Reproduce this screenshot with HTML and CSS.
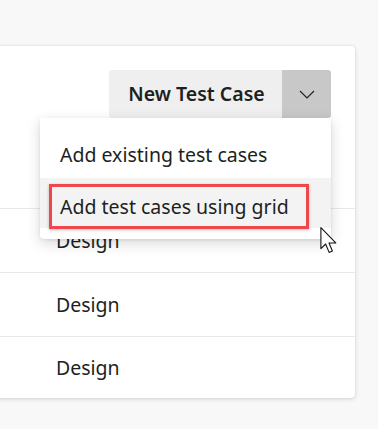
FILE: index.html
```html
<!DOCTYPE html>
<html>
<head>
  <title>Test Cases</title>
  <meta charset="UTF-8">
  <meta name="viewport" content="width=device-width, initial-scale=1.0">
  <link rel="stylesheet" href="styles.css">
</head>
<body>
  <main class="card">
    <div class="toolbar">
      <div class="split">
        <button class="split-main">New Test Case</button>
        <button class="split-toggle" aria-label="More options">
          <svg width="16" height="9" viewBox="0 0 16 9"><path d="M1 1 L8 8 L15 1" fill="none" stroke="#222" stroke-width="1.2"/></svg>
        </button>
        <ul class="menu">
          <li class="menu-item">Add existing test cases</li>
          <li class="menu-item hover"><span class="highlight">Add test cases using grid</span></li>
        </ul>
      </div>
    </div>

    <div class="spacer"></div>

    <div class="row">Design</div>
    <div class="row">Design</div>
    <div class="row last">Design</div>
  </main>

  <svg class="cursor" width="18" height="27" viewBox="0 0 13 20">
    <path d="M0.5 0.5 L0.5 16 L4 12.6 L6.6 18.8 L9 17.8 L6.5 11.8 L11.5 11.8 Z" fill="#fff" stroke="#111" stroke-width="0.8" stroke-linejoin="round"/>
  </svg>
</body>
</html>
```

FILE: styles.css
```css
body {
  margin: 0;
  background-color: #f8f8f8;
  font-family: 'Noto Sans', 'Open Sans', sans-serif;
  color: #201f1e;
  overflow: hidden;
  position: relative;
  height: 429px;
}

.card {
  margin: 46px 0 0 -20px;
  width: 375px;
  background-color: #fff;
  border-radius: 4px;
  box-shadow: 0 1px 4px rgba(0, 0, 0, 0.16), 0 0 1px rgba(0, 0, 0, 0.1);
}

.toolbar {
  display: flex;
  justify-content: flex-end;
  padding: 24px 24px 0 0;
}

.split {
  display: flex;
  position: relative;
  height: 48px;
}

.split button {
  border: none;
  margin: 0;
  font-family: inherit;
  color: #201f1e;
  cursor: pointer;
}

.split-main {
  width: 173px;
  padding: 0 0 2px 2px;
  background-color: #efefef;
  font-size: 19.5px;
  font-weight: 600;
  border-radius: 3px 0 0 3px;
}

.split-toggle {
  width: 49px;
  background-color: #c8c8c8;
  border-radius: 0 3px 3px 0;
  display: flex;
  align-items: center;
  justify-content: center;
}

.menu {
  position: absolute;
  top: 100%;
  right: 0;
  width: 291px;
  margin: 0;
  padding: 12px 0 11px;
  list-style: none;
  background-color: #fff;
  border-radius: 0 0 4px 4px;
  box-shadow: 0 4px 14px rgba(0, 0, 0, 0.16), 0 1px 3px rgba(0, 0, 0, 0.08);
  z-index: 2;
}

.menu-item {
  display: flex;
  align-items: center;
  height: 48px;
  padding-left: 20px;
  font-size: 19.5px;
}

.menu-item.hover {
  align-items: flex-start;
  height: 50px;
  background-color: #f3f3f3;
  padding-left: 9px;
}

.highlight {
  display: flex;
  align-items: center;
  width: 246px;
  height: 39px;
  margin-top: 6px;
  padding-left: 8px;
  border: 3px solid #f0474c;
  box-shadow: 0 1px 3px rgba(0, 0, 0, 0.25);
}

.spacer {
  height: 90px;
  border-bottom: 1px solid #e8e8e8;
}

.row {
  height: 63px;
  display: flex;
  align-items: center;
  padding-left: 76px;
  font-size: 19.5px;
  border-bottom: 1px solid #e8e8e8;
}

.row.last {
  height: 61px;
  border-bottom: none;
}

.cursor {
  position: absolute;
  left: 320px;
  top: 227px;
  z-index: 3;
}
```
